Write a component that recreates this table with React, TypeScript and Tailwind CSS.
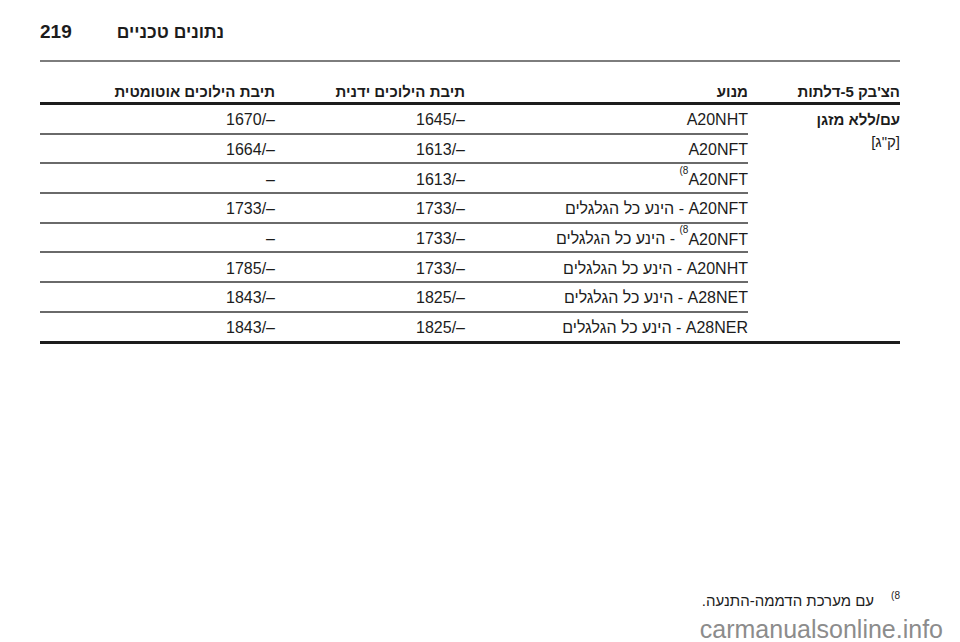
import React from "react";

type Row = { engine: React.ReactNode; manual: string; auto: string };

const Sup = () => (
  <sup className="text-[10px] align-super leading-none">
    <bdo dir="ltr">(8</bdo>
  </sup>
);

const AWD = "הינע כל הגלגלים";

const rows: Row[] = [
  { engine: <span dir="ltr">A20NHT</span>, manual: "1645/–", auto: "1670/–" },
  { engine: <span dir="ltr">A20NFT</span>, manual: "1613/–", auto: "1664/–" },
  {
    engine: (
      <span dir="ltr">
        <Sup />
        A20NFT
      </span>
    ),
    manual: "1613/–",
    auto: "–",
  },
  {
    engine: (
      <>
        <span dir="ltr">A20NFT</span> - {AWD}
      </>
    ),
    manual: "1733/–",
    auto: "1733/–",
  },
  {
    engine: (
      <>
        <span dir="ltr">
          <Sup />
          A20NFT
        </span>{" "}
        - {AWD}
      </>
    ),
    manual: "1733/–",
    auto: "–",
  },
  {
    engine: (
      <>
        <span dir="ltr">A20NHT</span> - {AWD}
      </>
    ),
    manual: "1733/–",
    auto: "1785/–",
  },
  {
    engine: (
      <>
        <span dir="ltr">A28NET</span> - {AWD}
      </>
    ),
    manual: "1825/–",
    auto: "1843/–",
  },
  {
    engine: (
      <>
        <span dir="ltr">A28NER</span> - {AWD}
      </>
    ),
    manual: "1825/–",
    auto: "1843/–",
  },
];

export default function App() {
  return (
    <div className="relative w-[960px] h-[642px] overflow-hidden bg-white text-[#1c1c1c] font-['Liberation_Sans','Noto_Sans',Arial,sans-serif]">
      <div className="pl-[40px] pr-[60px]">
        {/* Page header */}
        <div
          dir="ltr"
          className="h-[62px] border-b-2 border-[#7d7d7d] flex items-start pt-[22px] gap-[45px]"
        >
          <span className="text-[19px] font-bold leading-[20px]">219</span>
          <span dir="rtl" className="text-[17.5px] font-bold leading-[20px]">
            נתונים טכניים
          </span>
        </div>

        <div dir="rtl">
          {/* Table header */}
          <div className="flex h-[43px] items-end pb-[2px] border-b-[3px] border-[#1c1c1c] text-[15px] font-bold leading-[16px]">
            <div className="w-[152px] shrink-0">הצ'בק 5-דלתות</div>
            <div className="w-[283px] shrink-0">מנוע</div>
            <div className="w-[190px] shrink-0">תיבת הילוכים ידנית</div>
            <div className="flex-1">תיבת הילוכים אוטומטית</div>
          </div>

          {/* Table body */}
          <div className="flex border-b-[3px] border-[#1c1c1c]">
            <div className="w-[152px] shrink-0 pt-[7px]">
              <div className="text-[15px] font-bold leading-[16px]">עם/ללא מזגן</div>
              <div className="mt-[6px] text-[15px] leading-[16px]">[ק"ג]</div>
            </div>
            <div className="flex-1">
              {rows.map((r, i) => (
                <div
                  key={i}
                  className={
                    i < rows.length - 1
                      ? "flex items-center pt-[3px] h-[29.7px] border-b-2 border-[#6a6a6a] text-[16px] leading-[16px]"
                      : "flex items-center pt-[3px] h-[28.1px] text-[16px] leading-[16px]"
                  }
                >
                  <div className="w-[283px] shrink-0 whitespace-nowrap">{r.engine}</div>
                  <div className="w-[190px] shrink-0">
                    <span dir="ltr">{r.manual}</span>
                  </div>
                  <div className="flex-1">
                    <span dir="ltr">{r.auto}</span>
                  </div>
                </div>
              ))}
            </div>
          </div>

          {/* Footnote */}
          <div className="mt-[249px] flex items-start">
            <span className="text-[10px] leading-[10px] mt-[-2px]">
              <bdo dir="ltr">(8</bdo>
            </span>
            <span className="mr-[17px] text-[15px] leading-[16px]">
              עם מערכת הדממה-התנעה.
            </span>
          </div>
        </div>
      </div>

      {/* Watermark */}
      <div className="absolute bottom-0 right-[17px] text-[25px] leading-[25px] text-[#8c8c8c]">
        carmanualsonline.info
      </div>
    </div>
  );
}
